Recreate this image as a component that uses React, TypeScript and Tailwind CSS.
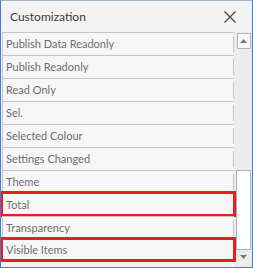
const items = [
  "Publish Data Readonly",
  "Publish Readonly",
  "Read Only",
  "Sel.",
  "Selected Colour",
  "Settings Changed",
  "Theme",
  "Total",
  "Transparency",
  "Visible Items",
];

const marked = ["Total", "Visible Items"];

export default function App() {
  return (
    <div className="w-[253px] h-[268px] flex flex-col border border-[#3b7fd0] border-t-[#9fb4cc] bg-[#f3f3f3] font-['Lato',sans-serif] overflow-hidden">
      {/* Title */}
      <div className="h-[31px] flex items-center justify-between pl-[9px] pr-[16px] text-[12px] text-[#3a3a3a]">
        <span>Customization</span>
        <svg width="12" height="12" viewBox="0 0 12 12" className="text-[#444]">
          <path d="M0.5 0.5 L11.5 11.5 M11.5 0.5 L0.5 11.5" stroke="currentColor" strokeWidth="1.2" fill="none" />
        </svg>
      </div>

      <div className="flex flex-1 pl-px">
        {/* List */}
        <div className="w-[232px] flex flex-col">
          {items.map((it) => (
            <div
              key={it}
              className="relative h-[23px] flex items-center border-l border-t border-[#c6c6c6] bg-[#f6f6f6] last:border-b"
            >
              <span className="flex-1 pl-[3px] text-[11px] text-[#6e6e6e] whitespace-nowrap">{it}</span>
              <div className="w-px self-stretch my-[3px] bg-[#c6c6c6]" />
              {marked.includes(it) && (
                <div className="absolute left-[-3px] right-[-2px] top-[-3px] bottom-[-1px] border-[3px] border-[#ed1c24]" />
              )}
            </div>
          ))}
        </div>

        {/* Scrollbar */}
        <div className="flex-1 flex flex-col items-center bg-[#ececec] pt-px pb-[3px]">
          <div className="w-[14px] h-[16px] ml-px border border-[#b5b5b5] bg-[#f8f8f8] flex items-center justify-center">
            <svg width="7" height="4" viewBox="0 0 7 4">
              <path d="M0 4 L3.5 0 L7 4 Z" fill="#777" />
            </svg>
          </div>
          <div className="flex-1" />
          <div className="w-[15px] h-[80px] border border-[#b0b0b0] bg-white" />
          <div className="h-[14px] flex items-center justify-center ml-px">
            <svg width="7" height="4" viewBox="0 0 7 4">
              <path d="M0 0 L7 0 L3.5 4 Z" fill="#777" />
            </svg>
          </div>
        </div>
      </div>
    </div>
  );
}
